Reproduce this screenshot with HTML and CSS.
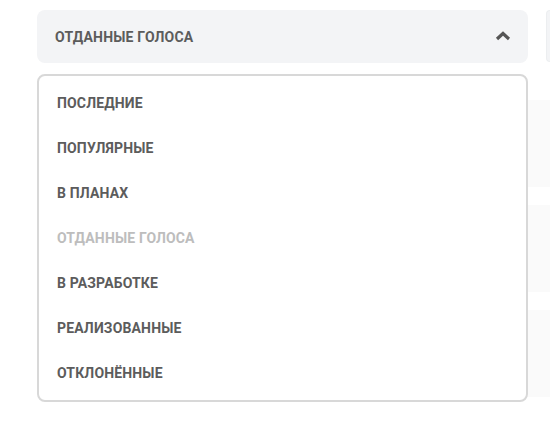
FILE: index.html
```html
<!DOCTYPE html>
<html lang="ru">
<head>
<meta charset="utf-8">
<link rel="stylesheet" href="styles.css">
</head>
<body>
<div class="page">
  <div class="main">
    <div class="filter">
      <button class="filter-toggle">
        <span>ОТДАННЫЕ ГОЛОСА</span>
        <svg class="chev" width="16" height="10" viewBox="0 0 16 10"><path d="M2 8 L8 2.5 L14 8" fill="none" stroke="#555" stroke-width="3.2" stroke-linejoin="miter"/></svg>
      </button>
      <ul class="menu">
        <li>ПОСЛЕДНИЕ</li>
        <li>ПОПУЛЯРНЫЕ</li>
        <li>В ПЛАНАХ</li>
        <li class="disabled">ОТДАННЫЕ ГОЛОСА</li>
        <li>В РАЗРАБОТКЕ</li>
        <li>РЕАЛИЗОВАННЫЕ</li>
        <li>ОТКЛОНЁННЫЕ</li>
      </ul>
    </div>
    <div class="cards">
      <div class="card"></div>
      <div class="card"></div>
      <div class="card"></div>
    </div>
  </div>
  <div class="side">
    <div class="side-box"></div>
  </div>
</div>
</body>
</html>
```
FILE: styles.css
```css
* { box-sizing: border-box; }
html, body { margin: 0; padding: 0; background: #fff; }
body { font-family: Roboto, "Liberation Sans", sans-serif; overflow: hidden; width: 550px; height: 426px; }
.page { display: flex; gap: 18px; padding: 10px 0 0 37px; }
.main { width: 491px; flex: none; position: relative; }
.filter { position: relative; }
.filter-toggle {
  width: 491px; height: 53px; border: 0; border-radius: 8px; background: #f3f4f6;
  display: flex; align-items: center; justify-content: space-between;
  padding: 0 17px 0 18px; font-family: inherit; font-weight: 700; font-size: 14px;
  color: #5c5c5c; letter-spacing: 0.2px; cursor: pointer;
}
.chev { display: block; margin-top: -2px; }
.menu {
  position: absolute; top: 64px; left: 0; width: 491px; z-index: 2;
  margin: 0; padding: 4px 0 5px; list-style: none; background: #fff;
  border: 2px solid #d8d8d8; border-radius: 8px;
}
.menu li {
  height: 45px; display: flex; align-items: center; padding-left: 18px;
  font-weight: 700; font-size: 14px; color: #5c5c5c; letter-spacing: 0.15px;
}
.menu li.disabled { color: #bdbdbd; }
.cards { display: flex; flex-direction: column; gap: 18px; margin-top: 37px; margin-right: -40px; }
.card { height: 87px; background: #fafafa; border-radius: 6px; }
.side { flex: 1; }
.side-box { height: 52px; background: #f3f4f6; border: 1px solid #eceef0; border-radius: 8px 0 0 8px; border-right: 0; }
```
